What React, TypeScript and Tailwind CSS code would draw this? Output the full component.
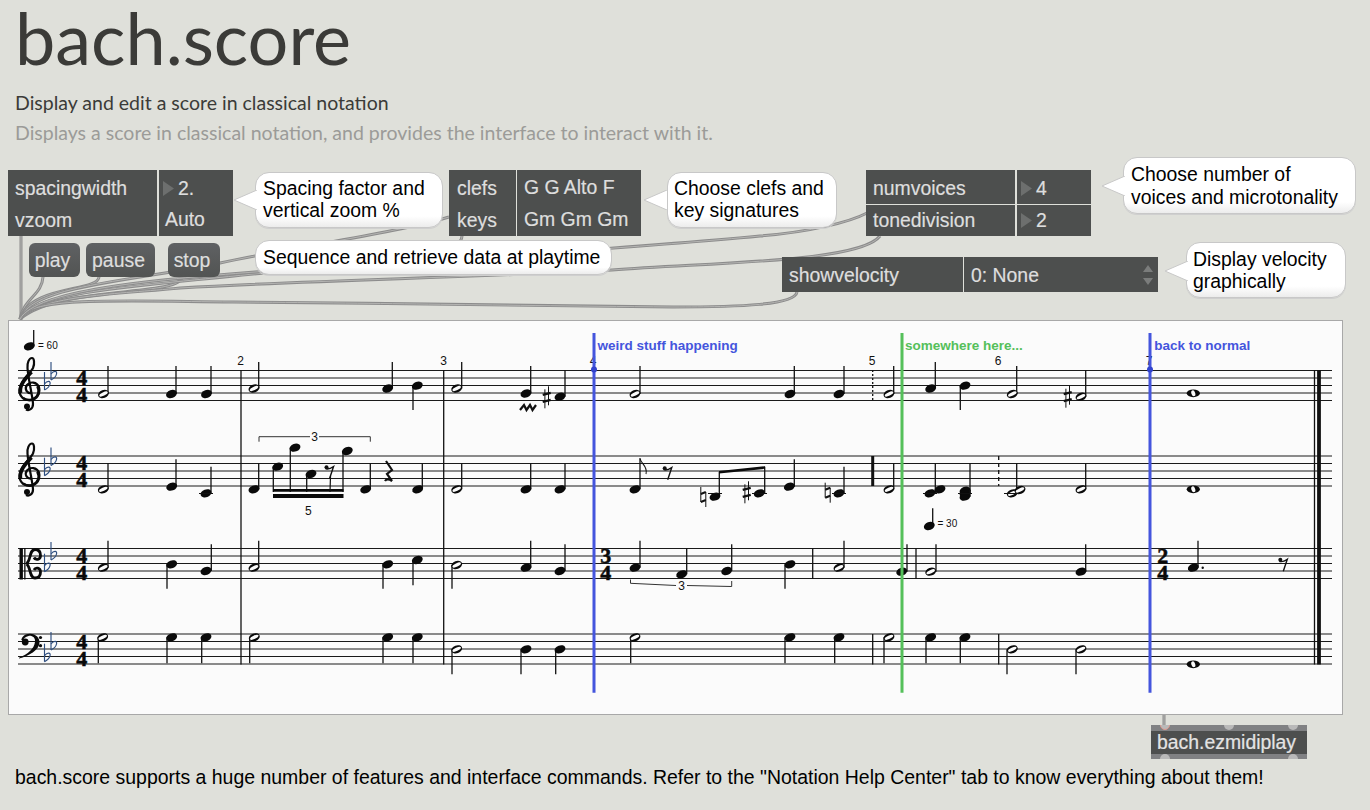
import React from "react";

type N = [number, number, number, number, ("q" | "h")?];

const STAVES = [370.5, 456, 548.5, 634];
const GAP = 7.5;

const notes: N[] = [
  // staff 1
  [103.5, 394, 108, 366, "h"], [171.5, 394, 176, 366], [206.5, 394, 211, 366],
  [254, 388.5, 258.7, 362, "h"], [387.7, 388.5, 392.3, 362], [417.3, 385.7, 413, 410],
  [456.7, 388.5, 461.7, 362, "h"], [526, 393.5, 530.7, 366], [560, 396.7, 565, 370],
  [635, 394, 640, 366, "h"], [790, 394, 794.3, 366], [839, 394, 844, 366],
  [889, 394, 893.7, 366, "h"], [930.7, 388.5, 935.3, 362], [965, 385.7, 960.3, 410],
  [1012.3, 394, 1016.7, 366, "h"], [1081, 396.7, 1085.7, 370, "h"],
  // staff 2
  [103.3, 489.3, 108, 463.3, "h"], [171.7, 486.7, 176, 459.3], [206, 493.3, 211, 466.7],
  [254, 489.3, 258.7, 463.3], [277.7, 466.7, 273.3, 492], [295, 447.7, 290.3, 492],
  [311, 474, 306.7, 492], [347.3, 451, 343, 492], [365.7, 489.3, 370.3, 463.3], [417.7, 489.3, 422.3, 463.3],
  [456.7, 489.3, 461.7, 463.3, "h"], [526, 489.3, 530.7, 463.3], [560, 489.3, 565, 463.3],
  [635, 489.3, 640, 458.3], [715, 496.7, 719.3, 471.7], [759.3, 493.3, 764.7, 466.7],
  [789.3, 486.7, 794.3, 459.3], [839, 493.3, 844, 466.7], [889, 489.3, 893.7, 463.3, "h"],
  [930, 493.3, 935.3, 463.3], [940, 489.3, 935.3, 489.3], [965, 490.7, 970, 463.3],
  [965, 493.3, 970, 490], [965, 496.7, 970, 490], [1012.3, 493.3, 1016.7, 463.3, "h"],
  [1020, 490, 1016.7, 490, "h"], [1081, 489.3, 1085.7, 463.3, "h"],
  // staff 3
  [103.3, 567.7, 108, 540.7, "h"], [171.7, 564.3, 167, 588.7], [206, 571, 211.3, 544.3],
  [254, 567.7, 258.7, 540.7, "h"], [387.7, 564.3, 383, 588.7], [417.3, 560, 413, 585.3],
  [456.7, 565, 452, 588.7, "h"], [526, 567.7, 530.7, 540.7], [560, 571, 565, 544.3],
  [635, 567.7, 640, 540.7], [681.7, 574.3, 686.7, 548.3], [726.7, 571, 731.7, 544.3],
  [790, 564.3, 785, 588.7], [839, 567.7, 844, 540.7, "h"], [901.7, 571.7, 907, 544.3],
  [930.7, 571.7, 936, 544.3, "h"], [1081, 571.7, 1085.7, 544.3], [1193.3, 567.7, 1198, 540.7],
  // staff 4
  [102.7, 637.3, 98.3, 663.3, "h"], [171.7, 637.3, 167, 663.3], [206, 637.3, 201.7, 663.3],
  [254.3, 637.3, 249.7, 663.3, "h"], [387.7, 637.3, 383, 663.3], [417.3, 637.3, 413, 663.3],
  [456.7, 649.3, 452, 674.3, "h"], [526, 649.3, 521, 674.3], [560, 649.3, 555.7, 674.3],
  [635, 637.3, 630.7, 663.3, "h"], [790, 637.3, 785, 663.3], [839, 637.3, 834.7, 663.3],
  [889, 637.3, 884, 663.3, "h"], [930.7, 637.3, 926, 663.3], [965, 637.3, 960.3, 663.3],
  [1012.3, 649.3, 1007, 674.3, "h"], [1081, 649.3, 1076, 674.3, "h"],
  // tempo marks
  [29.3, 346.3, 33.7, 330], [929.3, 526, 932.7, 508.3],
];

const Note = ({ n }: { n: N }) => {
  const [x, y, sx, sy, k] = n;
  return (
    <g>
      <line x1={sx} y1={y} x2={sx} y2={sy} stroke="#111" strokeWidth="1.3" />
      <ellipse cx={x} cy={y} rx="5.6" ry="3.9" transform={`rotate(-20 ${x} ${y})`} fill="#0a0a0a" />
      {k === "h" && <ellipse cx={x} cy={y} rx="4.6" ry="1.7" transform={`rotate(-25 ${x} ${y})`} fill="#fbfbfb" />}
    </g>
  );
};

const Whole = ({ x, y }: { x: number; y: number }) => (
  <g>
    <ellipse cx={x} cy={y} rx="6.6" ry="3.9" fill="#0a0a0a" />
    <ellipse cx={x} cy={y} rx="1.9" ry="3" transform={`rotate(-20 ${x} ${y})`} fill="#fbfbfb" />
  </g>
);

const Flat = ({ x, y }: { x: number; y: number }) => (
  <g fill="none" stroke="#2f4f80" strokeWidth="1.15">
    <line x1={x} y1={y - 13} x2={x} y2={y + 5} />
    <path d={`M${x} ${y - 1}C${x + 3} ${y - 5} ${x + 6.5} ${y - 4} ${x + 5.5} ${y - 1}C${x + 5} ${y + 2} ${x + 2} ${y + 4} ${x} ${y + 5}`} />
  </g>
);

const Sharp = ({ x, y }: { x: number; y: number }) => (
  <g stroke="#111" fill="none">
    <line x1={x - 1.8} y1={y - 8} x2={x - 1.8} y2={y + 11} strokeWidth="1" />
    <line x1={x + 1.8} y1={y - 11} x2={x + 1.8} y2={y + 8} strokeWidth="1" />
    <line x1={x - 4} y1={y - 2.5} x2={x + 4} y2={y - 4.5} strokeWidth="2.4" />
    <line x1={x - 4} y1={y + 4.5} x2={x + 4} y2={y + 2.5} strokeWidth="2.4" />
  </g>
);

const Natural = ({ x, y }: { x: number; y: number }) => (
  <g stroke="#111" fill="none">
    <line x1={x - 2.5} y1={y - 10} x2={x - 2.5} y2={y + 5} strokeWidth="1" />
    <line x1={x + 2.5} y1={y - 5} x2={x + 2.5} y2={y + 10} strokeWidth="1" />
    <line x1={x - 2.5} y1={y - 3} x2={x + 2.5} y2={y - 5} strokeWidth="2" />
    <line x1={x - 2.5} y1={y + 5} x2={x + 2.5} y2={y + 3} strokeWidth="2" />
  </g>
);

const EighthRest = ({ x, y }: { x: number; y: number }) => (
  <g>
    <circle cx={x - 3} cy={y - 3.5} r="2" fill="#111" />
    <path d={`M${x - 4} ${y - 2}C${x - 1} ${y - 1} ${x + 1} ${y - 2} ${x + 4} ${y - 4}L${x} ${y + 8}`} fill="none" stroke="#111" strokeWidth="1.4" />
  </g>
);

const TrebleClef = ({ y }: { y: number }) => (
  <g transform={`translate(0 ${y - 370.5})`} fill="none" stroke="#0a0a0a">
    <path d="M32 393C27 394 24 389 27 385C30 381 37 382 39 387C41 394 35 400 29 400C22 400 18 394 20 387C22 379 30 374 33 368C35 363 34 358 32 358C29 358 27 363 27.5 368C28 378 33 398 33 404C33 409 29 411 26 409.5" strokeWidth="2.2" />
    <path d="M20.5 393C19 385 26 378 31.5 372" strokeWidth="3.6" />
    <path d="M33 399.5C39 397 40 391 37.5 386" strokeWidth="2.8" />
    <path d="M23 398C26 400 30 400.5 33 399.5" strokeWidth="2.6" />
    <circle cx="27" cy="406.5" r="3" fill="#0a0a0a" stroke="none" />
  </g>
);

const BassClef = () => (
  <g fill="#0a0a0a">
    <path d="M19 657.8C28 654 34 649 35 642C35.6 637.5 32 635.3 28.5 636C25.5 636.6 23.5 638.4 23 640.5L21.3 640C22 636.5 25.5 633.6 30 633.8C36 634 40 638 39.5 643C39 650 29 656 19 658.5Z" />
    <circle cx="25.2" cy="642" r="3.4" />
    <circle cx="40.5" cy="637.5" r="1.6" />
    <circle cx="40.5" cy="645.7" r="1.6" />
  </g>
);

const AltoClef = () => (
  <g fill="none" stroke="#0a0a0a">
    <rect x="19.5" y="548" width="3.4" height="31.5" fill="#0a0a0a" stroke="none" />
    <rect x="24.2" y="548" width="1.3" height="31.5" fill="#0a0a0a" stroke="none" />
    <path d="M26.5 563.5C31 561 29 549.5 35 549.5C39.5 549.5 40.5 553 40.5 555.5C40.5 560 35.5 560.5 34 557.5" strokeWidth="2.8" />
    <path d="M26.5 564C31 566.5 29 578 35 578C39.5 578 40.5 574.5 40.5 572C40.5 567.5 35.5 567 34 570" strokeWidth="2.8" />
  </g>
);

const TS = ({ x, y, t }: { x: number; y: number; t: string }) => (
  <text x={x} y={y + 7.6} textAnchor="middle" fontSize="22" fontWeight="700" fill="#0a0a0a" stroke="#0a0a0a" strokeWidth="0.5" className="[font-family:'Liberation_Serif',serif]">{t}</text>
);

const Num = ({ x, y, t, s = 12 }: { x: number; y: number; t: string; s?: number }) => (
  <text x={x} y={y + s * 0.36} textAnchor="middle" fontSize={s} fill="#111" className="[font-family:'Liberation_Sans',sans-serif]">{t}</text>
);

const Lbl = ({ x, t, c }: { x: number; t: string; c: string }) => (
  <text x={x} y={349.6} fontSize="13.5" fontWeight="700" fill={c} className="[font-family:'Liberation_Sans',sans-serif]">{t}</text>
);

const Vb = ({ x, y1, y2, w = 1.3, dash }: { x: number; y1: number; y2: number; w?: number; dash?: string }) => (
  <line x1={x} x2={x} y1={y1} y2={y2} stroke="#111" strokeWidth={w} strokeDasharray={dash} />
);

const Ledger = ({ x1, x2, y }: { x1: number; x2: number; y: number }) => (
  <line x1={x1} x2={x2} y1={y} y2={y} stroke="#111" strokeWidth="1" />
);

function Score() {
  return (
    <svg viewBox="9 321 1333 393" className="block h-full w-full">
      {STAVES.map((s) =>
        [0, 1, 2, 3, 4].map((i) => (
          <line key={`${s}${i}`} x1="18" x2="1332" y1={s + i * GAP} y2={s + i * GAP} stroke="#1a1a1a" strokeWidth="1.1" />
        ))
      )}
      <Vb x={241} y1={370} y2={664.5} />
      <Vb x={443.7} y1={370} y2={664.5} />
      <Vb x={872.7} y1={370} y2={400.5} dash="2 2" />
      <Vb x={872.7} y1={456} y2={486} w={3} />
      <Vb x={872.7} y1={634} y2={664.5} />
      <Vb x={998.7} y1={456} y2={486} dash="4 3" />
      <Vb x={998.7} y1={634} y2={664.5} />
      <Vb x={812.7} y1={548.5} y2={579} />
      <Vb x={916} y1={548.5} y2={579} />
      <Vb x={1314.5} y1={370} y2={664.5} />
      <Vb x={1319} y1={370} y2={664.5} w={3.8} />

      <TrebleClef y={370.5} />
      <TrebleClef y={456} />
      <AltoClef />
      <BassClef />
      <Flat x={51} y={375} /><Flat x={44.5} y={385} />
      <Flat x={51} y={460.5} /><Flat x={44.5} y={470.7} />
      <Flat x={51} y={555} /><Flat x={44.5} y={566.7} />
      <Flat x={51} y={645} /><Flat x={44.5} y={656.7} />

      <TS x={81.7} y={377} t="4" /><TS x={81.7} y={394} t="4" />
      <TS x={81.7} y={462.5} t="4" /><TS x={81.7} y={479.5} t="4" />
      <TS x={81.7} y={555.5} t="4" /><TS x={81.7} y={572.5} t="4" />
      <TS x={81.7} y={641} t="4" /><TS x={81.7} y={658} t="4" />
      <TS x={605.7} y={555.5} t="3" /><TS x={605.7} y={572.5} t="4" />
      <TS x={1162.7} y={555.5} t="2" /><TS x={1162.7} y={572.5} t="4" />

      {notes.map((n, i) => <Note key={i} n={n} />)}
      <Whole x={1193.3} y={393.3} />
      <Whole x={1193.3} y={489.3} />
      <Whole x={1193.3} y={664.3} />
      <circle cx="1202.7" cy="567.7" r="1.2" fill="#111" />

      <Ledger x1={199} x2={213} y={493.5} />
      <Ledger x1={708} x2={722} y={493.5} />
      <Ledger x1={752} x2={767} y={493.5} />
      <Ledger x1={832} x2={846} y={493.5} />
      <Ledger x1={923} x2={937} y={493.5} />
      <Ledger x1={958} x2={972} y={493.5} />
      <Ledger x1={1004} x2={1019} y={493.5} />

      <path d="M273 489H343.5V491.8H273Z" fill="#0a0a0a" />
      <path d="M273 494H343.5V498H273Z" fill="#0a0a0a" />
      <path d="M719 471L765 466.2V468.8L719 473.6Z" fill="#0a0a0a" />
      <path d="M640 458.5C641 464 648 466 646 474" fill="none" stroke="#111" strokeWidth="1.1" />

      <Sharp x={546.7} y={397.3} />
      <Sharp x={746.7} y={492.3} />
      <Sharp x={1067.7} y={396.7} />
      <Natural x={703.3} y={497} />
      <Natural x={827.7} y={492.7} />
      <EighthRest x={667.7} y={471.7} />
      <EighthRest x={329.5} y={470.7} />
      <EighthRest x={1283.3} y={563.3} />
      <line x1="330.5" y1="476" x2="330" y2="492" stroke="#111" strokeWidth="1.2" />
      <path d="M386 461L392 470L387 474L392 481C389 479 386 479 385 481" fill="none" stroke="#111" strokeWidth="2.2" />
      <path d="M520 410L524 405L526.5 410L530 405L532.5 410L536 405" fill="none" stroke="#111" strokeWidth="2.2" />

      <path d="M259 441.7V436.7H310M319 436.7H370.3V441.7" fill="none" stroke="#333" strokeWidth="1" />
      <path d="M630.5 579.5V583.3L676 585.5M687 585.5L731.7 586.5V581" fill="none" stroke="#333" strokeWidth="1" />
      <Num x={314.5} y={437} t="3" />
      <Num x={681.7} y={586} t="3" />
      <Num x={308.3} y={510.5} t="5" />
      <Num x={240.7} y={360.7} t="2" />
      <Num x={443.5} y={360.7} t="3" />
      <Num x={593} y={360.7} t="4" />
      <Num x={872} y={360.7} t="5" />
      <Num x={998} y={360.7} t="6" />
      <Num x={1149} y={360.7} t="7" />
      <text x={38} y={349} fontSize="10" fill="#111" className="[font-family:'Liberation_Sans',sans-serif]">= 60</text>
      <text x={937.5} y={526.8} fontSize="10" fill="#111" className="[font-family:'Liberation_Sans',sans-serif]">= 30</text>

      <line x1="594" x2="594" y1="333" y2="692.7" stroke="#4455dd" strokeWidth="3" />
      <line x1="902" x2="902" y1="333" y2="692.7" stroke="#55c05a" strokeWidth="3" />
      <line x1="1150" x2="1150" y1="333" y2="692.7" stroke="#4455dd" strokeWidth="3" />
      <circle cx="594" cy="369.5" r="3" fill="#3344cc" />
      <circle cx="1150" cy="369.5" r="3" fill="#3344cc" />
      <Lbl x={597.5} t="weird stuff happening" c="#4455dd" />
      <Lbl x={905} t="somewhere here..." c="#55c05a" />
      <Lbl x={1154.3} t="back to normal" c="#4455dd" />
    </svg>
  );
}

const cords = [
  "M21 236V320",
  "M43 277C42 295 24 298 20 319",
  "M99 277C98 292 30 285 20 319",
  "M182 277C180 297 60 285 20 319",
  "M20 319C32 285 130 282 220 263C300 246 400 232 449 217",
  "M20 319C36 292 120 288 253 274C400 262 613 250 760 236C810 232 850 222 867 213",
  "M20 319C40 295 120 294 180 288C320 280 460 278 612 270C720 262 860 262 880 236",
  "M20 319C28 296 120 301 233 302C380 303 460 305 673 307C740 307 795 305 797 292",
  "M20 319C36 290 150 280 255 272C330 266 462 262 462 236",
  "M1164 715V725",
];

const Tri = () => (
  <svg width="11" height="15" viewBox="0 0 11 15" className="shrink-0">
    <path d="M0 0L11 7.5L0 15Z" fill="#6d6f6e" />
  </svg>
);

const FONT = "[font-family:'Liberation_Sans',sans-serif] text-[19.4px]";
const BOX = `relative shrink-0 bg-[#4d4f4e] text-[#dedede] leading-[22px] ${FONT} [-webkit-text-stroke:0.2px_#dedede]`;
const TWO = "flex h-[66px] flex-col gap-[10px] pt-[7px]";
const BUB = `relative shrink-0 rounded-[14px] border border-[#c8c8c8] bg-gradient-to-b from-white from-80% to-[#ececec] text-black leading-[22px] ${FONT} shadow-[0_1px_0_#cfcfcf]`;
const BTN = `mt-[3px] h-[34px] shrink-0 rounded-[6px] bg-gradient-to-b from-[#5f6163] to-[#525453] text-[#dedede] leading-[34px] pr-[4px] text-center ${FONT} [-webkit-text-stroke:0.2px_#dedede]`;

const Pointer = ({ cls }: { cls: string }) => (
  <svg width="23" height="20" viewBox="0 0 23 20" className={`absolute ${cls}`}>
    <path d="M23 0L0 10L23 20Z" fill="#fff" />
    <path d="M23 0L0 10L23 20" fill="none" stroke="#c8c8c8" strokeWidth="1" />
  </svg>
);

const Handle = ({ cls }: { cls: string }) => (
  <div className={`absolute h-[10px] w-[10px] rounded-full bg-[#b9b9b9] ${cls}`} />
);

export default function App() {
  return (
    <div className="relative flex h-[810px] w-[1370px] flex-col overflow-hidden bg-[#dfe0da]">
      <svg width="1370" height="810" className="absolute left-0 top-0">
        {cords.map((d, i) => (
          <g key={i} fill="none">
            <path d={d} stroke="#8c8c8c" strokeWidth="3" />
            <path d={d} stroke="#b4b4b2" strokeWidth="1" />
          </g>
        ))}
      </svg>

      <header className="relative h-[170px] shrink-0 pl-[15px] [font-family:Lato,sans-serif] text-[19.5px]">
        <h1 className="text-[72px] leading-[74px] text-[#3b3b38]">bach.score</h1>
        <p className="mt-[17px] leading-[24px] text-[#3b3b38]">Display and edit a score in classical notation</p>
        <p className="mt-[6px] leading-[24px] text-[#9b9b98]">Displays a score in classical notation, and provides the interface to interact with it.</p>
      </header>

      {/* first row of patcher objects */}
      <div className="flex h-[66px] shrink-0 items-start pl-[8px]">
        <div className={`${BOX} ${TWO} w-[149px] pl-[7px]`}>
          <div>spacingwidth</div>
          <div>vzoom</div>
        </div>
        <div className={`${BOX} ${TWO} ml-[2px] w-[74px]`}>
          <div className="flex items-center gap-[4px] pl-[4px]"><Tri /><span>2.</span></div>
          <div className="mt-[-1px] pl-[6px]">Auto</div>
        </div>
        <div className={`${BUB} ml-[22px] mt-[2px] h-[56px] w-[188px] pl-[7px] pt-[4px]`}>
          <Pointer cls="left-[-22px] top-[17px]" />
          <div className="relative">Spacing factor and<br />vertical zoom %</div>
        </div>
        <div className={`${BOX} ${TWO} ml-[6px] w-[67px] pl-[8px]`}>
          <div>clefs</div>
          <div>keys</div>
        </div>
        <div className={`${BOX} ${TWO} ml-[1px] w-[124px] pl-[7px] !pt-[6px]`}>
          <div>G G Alto F</div>
          <div>Gm Gm Gm</div>
        </div>
        <div className={`${BUB} ml-[26px] mt-[2px] h-[56px] w-[170px] pl-[6px] pt-[4px]`}>
          <Pointer cls="left-[-24px] top-[17px]" />
          <div className="relative">Choose clefs and<br />key signatures</div>
        </div>
        <div className={`${BOX} ${TWO} ml-[29px] w-[149px] pl-[7px]`}>
          <div>numvoices</div>
          <div>tonedivision</div>
          <div className="absolute left-0 top-[34px] h-px w-full bg-[#dfe0da]" />
        </div>
        <div className={`${BOX} ${TWO} ml-[2px] w-[74px]`}>
          <div className="flex items-center gap-[4px] pl-[4px]"><Tri /><span>4</span></div>
          <div className="flex items-center gap-[4px] pl-[4px]"><Tri /><span>2</span></div>
          <div className="absolute left-0 top-[34px] h-px w-full bg-[#dfe0da]" />
        </div>
        <div className={`${BUB} z-10 ml-[32px] mt-[-13px] h-[57px] w-[233px] pl-[7px] pt-[5px] !leading-[23px]`}>
          <Pointer cls="left-[-22px] top-[18px]" />
          <div className="relative">Choose number of<br />voices and microtonality</div>
        </div>
      </div>

      {/* second row of patcher objects */}
      <div className="mt-[4px] flex h-[58px] shrink-0 items-start pl-[29px]">
        <div className={`${BTN} relative w-[51px]`}>play</div>
        <div className={`${BTN} relative ml-[6px] w-[69px]`}>pause</div>
        <div className={`${BTN} relative ml-[13px] w-[52px]`}>stop</div>
        <div className={`${BUB} ml-[35px] h-[35px] w-[357px] pl-[7px] pt-[5px]`}>Sequence and retrieve data at playtime</div>
        <div className={`${BOX} ml-[170px] mt-[17px] h-[35px] w-[181px] pl-[7px] pt-[7px]`}>showvelocity</div>
        <div className={`${BOX} ml-[1px] mt-[17px] flex h-[35px] w-[194px] justify-between pl-[7px] pr-[4px] pt-[7px]`}>
          <span>0: None</span>
          <svg width="12" height="20" viewBox="0 0 12 20" className="mt-[1px] shrink-0">
            <path d="M1 7L6 0L11 7Z" fill="#7b7d7c" />
            <path d="M1 13L6 20L11 13Z" fill="#7b7d7c" />
          </svg>
        </div>
        <div className={`${BUB} ml-[28px] mt-[2px] h-[56px] w-[160px] pl-[6px] pt-[5px]`}>
          <Pointer cls="left-[-22px] top-[18px]" />
          <div className="relative">Display velocity<br />graphically</div>
        </div>
      </div>

      <div className="relative ml-[8px] mt-[22px] h-[395px] w-[1335px] shrink-0 border border-[#a8a8a8] bg-[#fbfbfb]">
        <Score />
      </div>

      <div className={`relative ml-[1151px] mt-[10px] flex h-[34px] w-[156px] shrink-0 items-center overflow-hidden bg-[#808183] ${FONT}`}>
        <div className="relative flex h-[23px] w-full items-center bg-[#4d4f4e] pl-[6px] leading-[23px] text-[#e4e4e4] [-webkit-text-stroke:0.2px_#e4e4e4]">bach.ezmidiplay</div>
        <Handle cls="left-[9px] top-[-5px] border border-[#e09a90]" />
        <Handle cls="left-[73px] top-[-5px]" />
        <Handle cls="left-[137px] top-[-5px]" />
        <Handle cls="left-[9px] top-[29px]" />
        <Handle cls="left-[137px] top-[29px]" />
      </div>

      <p className={`relative mt-[7px] shrink-0 whitespace-nowrap pl-[15px] leading-[22px] text-black !text-[19.47px] ${FONT}`}>
        bach.score supports a huge number of features and interface commands. Refer to the "Notation Help Center" tab to know everything about them!
      </p>
    </div>
  );
}
